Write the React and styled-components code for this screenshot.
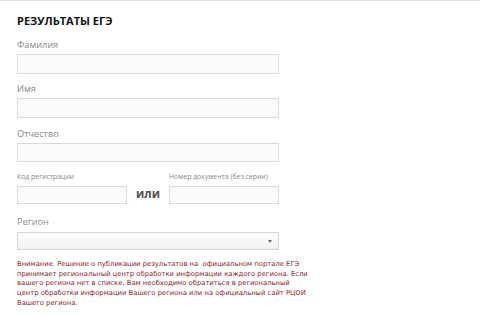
import React from "react";
import styled, { createGlobalStyle } from "styled-components";

const Global = createGlobalStyle`
  html, body { margin: 0; padding: 0; background: #fff; }
  body { width: 480px; height: 316px; overflow: hidden; }
`;

const Page = styled.div`
  border-top: 1px solid #e0e0e0;
  width: 480px;
  height: 315px;
  box-sizing: border-box;
  padding: 10px 0 0 17px;
  font-family: "Open Sans", sans-serif;
`;

const Form = styled.div`
  width: 262px;
  display: flex;
  flex-direction: column;
`;

const Title = styled.h1`
  margin: 0;
  font-family: "Open Sans", sans-serif;
  font-weight: 700;
  font-size: 11px;
  line-height: 20px;
  color: #111;
`;

const Label = styled.label`
  display: block;
  font-family: "Open Sans", sans-serif;
  font-size: ${(p) => (p.$small ? "6.9px" : "9.2px")};
  color: #8a8a8a;
  line-height: ${(p) => (p.$small ? "12px" : "14px")};
  margin: ${(p) => p.$m || "0"};
  white-space: nowrap;
`;

const Input = styled.div`
  box-sizing: border-box;
  height: ${(p) => p.$h || "20px"};
  width: 100%;
  border: 1px solid #dadada;
  background: #fcfcfc;
`;

const Row = styled.div`
  display: flex;
  align-items: flex-end;
`;

const Col = styled.div`
  width: 110px;
  display: flex;
  flex-direction: column;
`;

const Or = styled.div`
  flex: 1;
  text-align: center;
  font-family: "Open Sans", sans-serif;
  font-weight: 700;
  font-size: 11.5px;
  line-height: 18px;
  color: #505050;
  padding-bottom: 1px;
`;

const Select = styled.div`
  box-sizing: border-box;
  height: 18px;
  width: 100%;
  border: 1px solid #d6d6d6;
  background: linear-gradient(#ffffff, #f1f1f1);
  display: flex;
  align-items: center;
  justify-content: flex-end;
  padding-right: 6px;
`;

const Arrow = styled.span`
  width: 0;
  height: 0;
  border-left: 2.5px solid transparent;
  border-right: 2.5px solid transparent;
  border-top: 3px solid #666;
`;

const Notice = styled.p`
  margin: 10px 0 0;
  font-family: "DejaVu Sans", Verdana, sans-serif;
  font-size: 6.8px;
  line-height: 9.7px;
  color: #8b1c2c;
  white-space: nowrap;
`;

export default function App() {
  return (
    <>
      <Global />
      <Page>
        <Form>
          <Title>РЕЗУЛЬТАТЫ ЕГЭ</Title>
          <Label $m="7px 0 2px">Фамилия</Label>
          <Input />
          <Label $m="8px 0 2px">Имя</Label>
          <Input />
          <Label $m="9px 0 2px">Отчество</Label>
          <Input $h="19px" />
          <Row>
            <Col>
              <Label $small $m="9px 0 3px">Код регистрации</Label>
              <Input $h="18px" />
            </Col>
            <Or>или</Or>
            <Col>
              <Label $small $m="9px 0 3px">Номер документа (без серии)</Label>
              <Input $h="18px" />
            </Col>
          </Row>
          <Label $m="11px 0 3px">Регион</Label>
          <Select>
            <Arrow />
          </Select>
          <Notice>
            Внимание. Решение о публикации результатов на&nbsp; официальном портале ЕГЭ
            <br />
            принимает региональный центр обработки информации каждого региона. Если
            <br />
            вашего региона нет в списке, Вам необходимо обратиться в региональный
            <br />
            центр обработки информации Вашего региона или на официальный сайт РЦОИ
            <br />
            Вашего региона.
          </Notice>
        </Form>
      </Page>
    </>
  );
}
